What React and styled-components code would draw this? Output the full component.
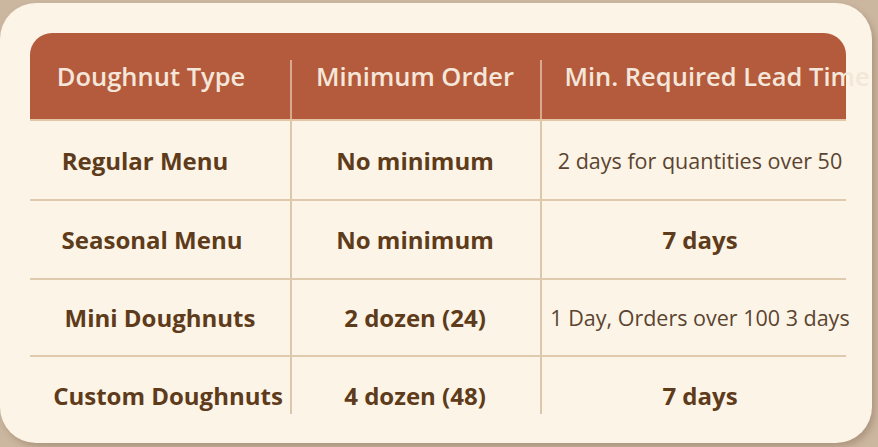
import React from 'react';
import styled, { createGlobalStyle } from 'styled-components';

const GlobalStyle = createGlobalStyle`
  html, body {
    margin: 0;
    padding: 0;
    background: #cbb6a0;
    font-family: "Open Sans", "Liberation Sans", sans-serif;
  }
`;

const Page = styled.div`
  width: 878px;
  height: 447px;
  overflow: hidden;
  padding: 3px 6px 4px 0;
  box-sizing: border-box;
`;

const Card = styled.div`
  height: 100%;
  background: #fcf4e6;
  border-radius: 36px;
  box-shadow: 3px 4px 6px rgba(120, 95, 70, 0.35);
  padding: 30px 0 0 30px;
  box-sizing: border-box;
`;

const Table = styled.div`
  display: grid;
  grid-template-columns: 260px 250px 306px;
  grid-template-rows: 88px 80px 79px 77px 77px;
`;

const HeadCell = styled.div`
  position: relative;
  background: #b55b3d;
  color: #f4e7da;
  font-size: 25.5px;
  font-weight: 600;
  display: flex;
  align-items: center;
  justify-content: center;
  white-space: nowrap;
  padding-left: ${p => p.$shift || 0}px;
  padding-right: ${p => p.$trim || 0}px;
  border-top-left-radius: ${p => (p.$first ? '22px' : '0')};
  border-top-right-radius: ${p => (p.$last ? '22px' : '0')};
  border-bottom: 2px solid #e3c6a6;
  box-sizing: border-box;

  &::before {
    content: '';
    display: ${p => (p.$first ? 'none' : 'block')};
    position: absolute;
    left: 0;
    top: 27px;
    bottom: 0;
    width: 2px;
    background: #d8a98c;
  }
`;

const Cell = styled.div`
  position: relative;
  display: flex;
  align-items: center;
  justify-content: center;
  white-space: nowrap;
  color: ${p => (p.$light ? '#5b4431' : '#5e3b1b')};
  font-size: ${p => (p.$light ? '21.5px' : '24px')};
  font-weight: ${p => (p.$light ? 400 : 700)};
  padding-left: ${p => p.$shift || 0}px;
  padding-right: ${p => p.$trim || 0}px;
  border-bottom: ${p => (p.$end ? 'none' : '2px solid #dfcaae')};
  box-sizing: border-box;

  &::before {
    content: '';
    display: ${p => (p.$col === 0 ? 'none' : 'block')};
    position: absolute;
    left: 0;
    top: 0;
    height: ${p => (p.$end ? '57px' : '100%')};
    width: 2px;
    background: #dcc7aa;
  }
`;

// shift/trim nudge the first column a little, as in the original
const rows = [
  { type: 'Regular Menu', min: 'No minimum', lead: '2 days for quantities over 50', light: true, shift: 0, trim: 30 },
  { type: 'Seasonal Menu', min: 'No minimum', lead: '7 days', light: false, shift: 0, trim: 16 },
  { type: 'Mini Doughnuts', min: '2 dozen (24)', lead: '1 Day, Orders over 100 3 days', light: true, shift: 0, trim: 0 },
  { type: 'Custom Doughnuts', min: '4 dozen (48)', lead: '7 days', light: false, shift: 16, trim: 0 },
];

export default function App() {
  return (
    <Page>
      <GlobalStyle />
      <Card>
        <Table>
          <HeadCell $first $trim={18}>Doughnut Type</HeadCell>
          <HeadCell>Minimum Order</HeadCell>
          <HeadCell $last $shift={48}>Min. Required Lead Time</HeadCell>
          {rows.map((r, i) => {
            const end = i === rows.length - 1;
            return (
              <React.Fragment key={r.type}>
                <Cell $col={0} $end={end} $shift={r.shift} $trim={r.trim}>{r.type}</Cell>
                <Cell $col={1} $end={end}>{r.min}</Cell>
                <Cell $col={2} $end={end} $light={r.light} $shift={14}>{r.lead}</Cell>
              </React.Fragment>
            );
          })}
        </Table>
      </Card>
    </Page>
  );
}
